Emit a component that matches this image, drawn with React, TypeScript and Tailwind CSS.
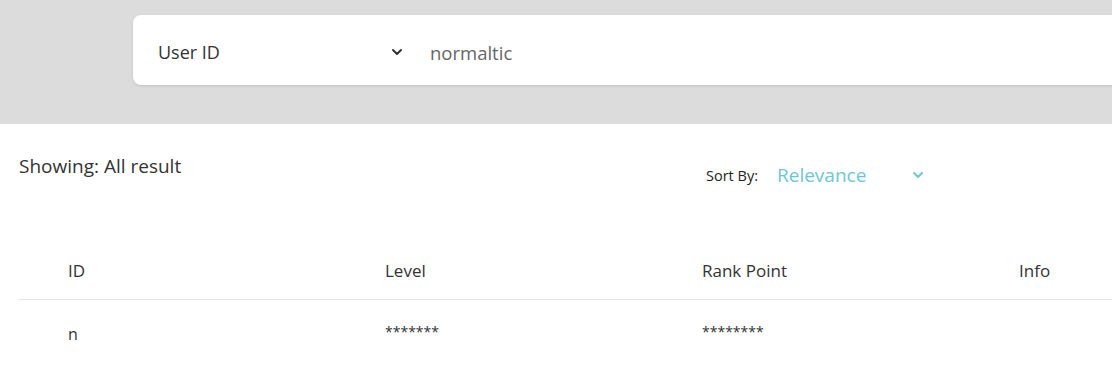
import React from "react";

const Chevron = ({ className }: { className?: string }) => (
  <svg className={className} width="12" height="8" viewBox="0 0 12 8" fill="none">
    <path d="M2 2l4 4 4-4" stroke="currentColor" strokeWidth="2" strokeLinecap="round" strokeLinejoin="round" />
  </svg>
);

export default function App() {
  return (
    <div className="w-[1112px] h-[371px] overflow-hidden bg-white text-[#333]" style={{ fontFamily: '"Open Sans", "Noto Sans", sans-serif' }}>
      <div className="h-[124px] bg-[#dcdcdc] pt-[15px] pl-[133px]">
        <div className="h-[70px] w-[1100px] rounded-[8px] bg-white shadow-[0_1px_3px_rgba(0,0,0,0.12)] flex items-center pl-[25px]">
          <div className="w-[247px] shrink-0 flex items-center justify-between pr-[2px] text-[18px] text-[#333]">
            <span className="pt-[5px]">User ID</span>
            <Chevron className="text-[#333] mt-[3px]" />
          </div>
          <div className="ml-[25px] pt-[5px] text-[18.5px] text-[#666]">normaltic</div>
        </div>
      </div>
      <div className="flex h-[116px] pl-[19px] pt-[29px]">
        <div className="w-[540px] shrink-0 text-[19px] text-[#333] leading-[26px]">Showing: All result</div>
        <div className="ml-[147px] mt-[9px] flex items-center h-[27px]">
          <span className="text-[14.5px] text-[#222]">Sort By:</span>
          <span className="ml-[19px] w-[137px] shrink-0 text-[19px] text-[#6cc6d6]">Relevance</span>
          <Chevron className="text-[#6cc6d6] mt-[-2px] ml-[-2px]" />
        </div>
      </div>
      <div className="ml-[19px]">
        <div className="flex h-[60px] border-b border-[#e2e2ea] pt-[19px] text-[17px] leading-[24px] text-[#333]">
          <div className="w-[317px] shrink-0 pl-[49px]">ID</div>
          <div className="w-[317px] shrink-0 pl-[49px]">Level</div>
          <div className="w-[317px] shrink-0 pl-[49px]">Rank Point</div>
          <div className="w-[317px] shrink-0 pl-[49px]">Info</div>
        </div>
        <div className="flex h-[64px] items-start text-[14px] text-[#333]">
          <div className="w-[317px] shrink-0 pl-[49px] pt-[23px] text-[16px] leading-[22px]">n</div>
          <div className="w-[317px] shrink-0 pl-[49px] pt-[22px] leading-[20px]">*******</div>
          <div className="w-[317px] shrink-0 pl-[49px] pt-[22px] leading-[20px]">********</div>
          <div className="w-[317px] shrink-0 pl-[49px]"></div>
        </div>
      </div>
    </div>
  );
}
